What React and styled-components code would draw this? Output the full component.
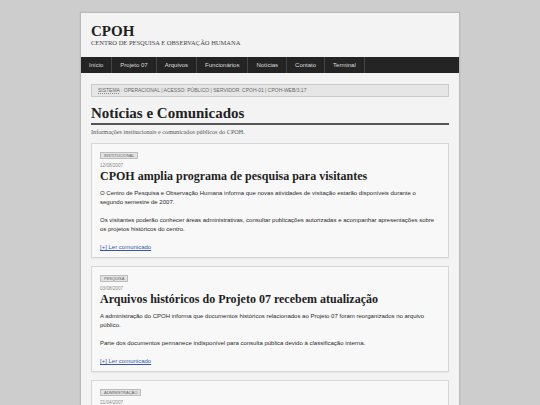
import React from 'react';
import styled, { createGlobalStyle } from 'styled-components';

const GlobalStyle = createGlobalStyle`
  html, body {
    margin: 0;
    padding: 0;
    background-color: #cdcdcd;
  }
  body {
    font-family: "Liberation Sans", Arial, sans-serif;
  }
`;

const Page = styled.div`
  width: 378px;
  margin: 12px auto 0;
  background-color: #f3f3f3;
  border: 1px solid #b9b9b9;
  box-shadow: 0 0 2px rgba(0, 0, 0, 0.08);
`;

const Header = styled.header`
  padding: 10px 10px;
`;

const SiteTitle = styled.h1`
  margin: 0;
  font-family: "Liberation Serif", "Times New Roman", serif;
  font-size: 15px;
  line-height: 16px;
  font-weight: 700;
  color: #1e1e1e;
`;

const SiteSubtitle = styled.div`
  font-family: "Liberation Serif", "Times New Roman", serif;
  font-size: 6.5px;
  line-height: 8px;
  color: #444;
`;

const Nav = styled.nav`
  display: flex;
  height: 16px;
  background-color: #242424;
`;

const NavItem = styled.a`
  display: block;
  padding: 0 8px;
  font-size: 6px;
  line-height: 16px;
  color: #dcdcdc;
  text-decoration: none;
  border-right: 1px solid #444;
`;

const Main = styled.main`
  padding: 11px 10px 0;
`;

const StatusBar = styled.div`
  height: 11px;
  padding: 0 6px;
  background-color: #e6e6e6;
  border: 1px solid #cacaca;
  font-size: 5px;
  line-height: 11px;
  color: #666;
  white-space: nowrap;
`;

const Abbr = styled.abbr`
  text-decoration: underline dotted #888;
`;

const PageTitle = styled.h2`
  margin: 7px 0 0;
  padding-bottom: 1px;
  font-family: "Liberation Serif", "Times New Roman", serif;
  font-size: 15px;
  line-height: 18px;
  font-weight: 700;
  color: #222;
  border-bottom: 2px solid #555;
`;

const PageIntro = styled.div`
  margin-top: 3px;
  font-family: "Liberation Serif", "Times New Roman", serif;
  font-size: 6.2px;
  line-height: 8px;
  color: #555;
`;

const List = styled.div`
  display: flex;
  flex-direction: column;
  gap: 8px;
  margin-top: 7px;
`;

const Card = styled.article`
  padding: 8px 8px 5px;
  background-color: #f8f8f8;
  border: 1px solid #d6d6d6;
  box-shadow: 0 1px 1px rgba(0, 0, 0, 0.04);
`;

const Badge = styled.div`
  width: fit-content;
  padding: 0 3px;
  font-size: 4px;
  line-height: 5px;
  color: #666;
  background-color: #e2e2e2;
  border: 1px solid #bdbdbd;
`;

const Date = styled.div`
  margin-top: 3px;
  font-size: 4.6px;
  line-height: 7px;
  color: #888;
`;

const CardTitle = styled.h3`
  margin: 0 0 6px;
  font-family: "Liberation Serif", "Times New Roman", serif;
  font-size: 12px;
  line-height: 14px;
  font-weight: 700;
  color: #1e1e1e;
`;

const Paragraph = styled.p`
  margin: 0 0 9px;
  font-size: 6px;
  line-height: 9px;
  color: #2a2a2a;
`;

const ReadMore = styled.a`
  display: block;
  font-size: 6px;
  line-height: 9px;
  color: #3557a8;
  text-decoration: underline;
`;

const menu = ['Início', 'Projeto 07', 'Arquivos', 'Funcionários', 'Notícias', 'Contato', 'Terminal'];

const news = [
  {
    tag: 'INSTITUCIONAL',
    date: '12/08/2007',
    title: 'CPOH amplia programa de pesquisa para visitantes',
    body: [
      'O Centro de Pesquisa e Observação Humana informa que novas atividades de visitação estarão disponíveis durante o segundo semestre de 2007.',
      'Os visitantes poderão conhecer áreas administrativas, consultar publicações autorizadas e acompanhar apresentações sobre os projetos históricos do centro.',
    ],
  },
  {
    tag: 'PESQUISA',
    date: '03/08/2007',
    title: 'Arquivos históricos do Projeto 07 recebem atualização',
    body: [
      'A administração do CPOH informa que documentos históricos relacionados ao Projeto 07 foram reorganizados no arquivo público.',
      'Parte dos documentos permanece indisponível para consulta pública devido à classificação interna.',
    ],
  },
  {
    tag: 'ADMINISTRAÇÃO',
    date: '21/04/2007',
    title: 'Novo horário de atendimento ao público',
    body: [
      'O atendimento ao público passa a funcionar de segunda a sexta-feira, das 8h às 17h.',
    ],
  },
];

const App = () => {
  return (
    <>
      <GlobalStyle />
      <Page>
        <Header>
          <SiteTitle>CPOH</SiteTitle>
          <SiteSubtitle>CENTRO DE PESQUISA E OBSERVAÇÃO HUMANA</SiteSubtitle>
        </Header>
        <Nav>
          {menu.map((item) => (
            <NavItem key={item} href="#">{item}</NavItem>
          ))}
        </Nav>
        <Main>
          <StatusBar>
            <Abbr title="Sistema">SISTEMA</Abbr> : OPERACIONAL | ACESSO: PÚBLICO | SERVIDOR: CPOH-01 | CPOH-WEB/3.17
          </StatusBar>
          <PageTitle>Notícias e Comunicados</PageTitle>
          <PageIntro>Informações institucionais e comunicados públicos do CPOH.</PageIntro>
          <List>
            {news.map((n) => (
              <Card key={n.title}>
                <Badge>{n.tag}</Badge>
                <Date>{n.date}</Date>
                <CardTitle>{n.title}</CardTitle>
                {n.body.map((p) => (
                  <Paragraph key={p}>{p}</Paragraph>
                ))}
                <ReadMore href="#">[+] Ler comunicado</ReadMore>
              </Card>
            ))}
          </List>
        </Main>
      </Page>
    </>
  );
};

export default App;
